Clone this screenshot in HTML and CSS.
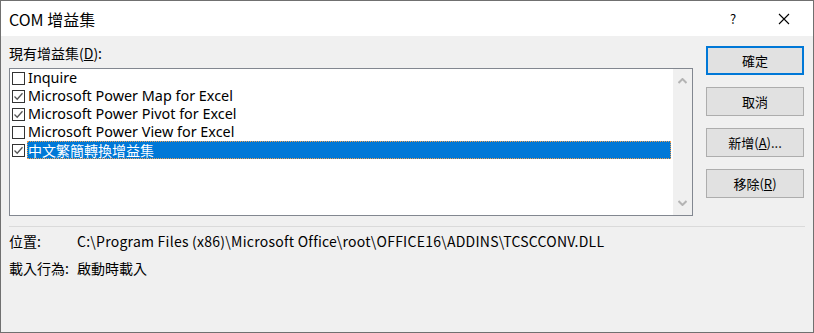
FILE: index.html
```html
<!DOCTYPE html>
<html lang="zh-Hant">

<head>
  <meta charset="UTF-8">
  <meta name="viewport" content="width=device-width, initial-scale=1.0">
  <title>COM 增益集</title>
  <link rel="stylesheet" href="styles.css">
</head>

<body>

  <div class="dialog">
    <div class="titlebar">
      <span class="title">COM 增益集</span>
      <span class="help">?</span>
      <span class="close">
        <svg width="12" height="12" viewBox="0 0 12 12"><path d="M1 1 L11 11 M11 1 L1 11" stroke="#000" stroke-width="1.1" fill="none"/></svg>
      </span>
    </div>

    <div class="main">
      <div class="left">
        <div class="label">現有增益集(<u>D</u>):</div>
        <div class="listbox">
          <div class="items">
            <div class="item">
              <span class="check"></span>
              <span class="text">Inquire</span>
            </div>
            <div class="item">
              <span class="check"><svg width="11" height="11" viewBox="0 0 11 11"><path d="M1.5 5.5 L4.2 8.2 L9.5 2.2" stroke="#555" stroke-width="1.3" fill="none"/></svg></span>
              <span class="text">Microsoft Power Map for Excel</span>
            </div>
            <div class="item">
              <span class="check"><svg width="11" height="11" viewBox="0 0 11 11"><path d="M1.5 5.5 L4.2 8.2 L9.5 2.2" stroke="#555" stroke-width="1.3" fill="none"/></svg></span>
              <span class="text">Microsoft Power Pivot for Excel</span>
            </div>
            <div class="item">
              <span class="check"></span>
              <span class="text">Microsoft Power View for Excel</span>
            </div>
            <div class="item">
              <span class="check"><svg width="11" height="11" viewBox="0 0 11 11"><path d="M1.5 5.5 L4.2 8.2 L9.5 2.2" stroke="#555" stroke-width="1.3" fill="none"/></svg></span>
              <span class="text selected">中文繁簡轉換增益集</span>
            </div>
          </div>
          <div class="scrollbar">
            <svg width="9" height="6" viewBox="0 0 9 6"><path d="M0.5 5 L4.5 1 L8.5 5" stroke="#b4b4b4" stroke-width="2" fill="none"/></svg>
            <svg width="9" height="6" viewBox="0 0 9 6"><path d="M0.5 1 L4.5 5 L8.5 1" stroke="#b4b4b4" stroke-width="2" fill="none"/></svg>
          </div>
        </div>
      </div>

      <div class="buttons">
        <button class="btn default">確定</button>
        <button class="btn">取消</button>
        <button class="btn">新增(<u>A</u>)...</button>
        <button class="btn">移除(<u>R</u>)</button>
      </div>
    </div>

    <div class="separator"></div>

    <div class="info">
      <div class="info-row">
        <span class="info-label">位置:</span>
        <span class="info-value path">C:\Program Files (x86)\Microsoft Office\root\OFFICE16\ADDINS\TCSCCONV.DLL</span>
      </div>
      <div class="info-row">
        <span class="info-label">載入行為:</span>
        <span class="info-value">啟動時載入</span>
      </div>
    </div>
  </div>

</body>

</html>
```

FILE: styles.css
```css
body {
  margin: 0;
  font-family: "Noto Sans", "Noto Sans CJK TC", sans-serif;
  color: #000;
}

.dialog {
  width: 814px;
  height: 333px;
  box-sizing: border-box;
  border: 1px solid #707070;
  background-color: #f0f0f0;
  overflow: hidden;
}

.titlebar {
  display: flex;
  align-items: center;
  height: 35px;
  background-color: #fff;
  padding-left: 8px;
}

.title {
  flex: 1;
  font-size: 16px;
  font-family: "Noto Sans CJK TC", sans-serif;
}

.help {
  width: 56px;
  text-align: center;
  font-size: 13px;
  font-family: "Noto Sans CJK TC", sans-serif;
}

.close {
  display: flex;
  justify-content: center;
  align-items: center;
  width: 46px;
  margin-right: 6px;
}

.main {
  display: flex;
  gap: 13px;
  padding: 6px 0 0 8px;
}

.left {
  width: 684px;
}

.label {
  height: 22px;
  line-height: 22px;
  font-size: 14px;
  font-family: "Noto Sans CJK TC", sans-serif;
  margin-bottom: 4px;
}

.listbox {
  display: flex;
  height: 148px;
  box-sizing: border-box;
  border: 1px solid #828790;
  background-color: #fff;
}

.items {
  flex: 1;
  padding-right: 2px;
}

.item {
  display: flex;
  align-items: center;
  height: 18px;
}

.check {
  display: flex;
  justify-content: center;
  align-items: center;
  width: 13px;
  height: 13px;
  box-sizing: border-box;
  border: 1px solid #333;
  margin-left: 2px;
  margin-right: 2px;
  background-color: #fff;
}

.text {
  flex: 1;
  height: 18px;
  line-height: 16px;
  box-sizing: border-box;
  border: 1px solid transparent;
  font-size: 14.4px;
  white-space: nowrap;
}

.text.selected {
  background-color: #0078d7;
  color: #fff;
  border: 1px dotted #f0a050;
  font-family: "Noto Sans CJK TC", sans-serif;
  font-size: 14px;
}

.scrollbar {
  display: flex;
  flex-direction: column;
  justify-content: space-between;
  align-items: center;
  width: 19px;
  background-color: #f0f0f0;
  padding: 9px 0 9px;
  box-sizing: border-box;
}

.buttons {
  display: flex;
  flex-direction: column;
  gap: 12px;
  margin-top: 4px;
}

.btn {
  width: 98px;
  height: 29px;
  background-color: #e1e1e1;
  border: 1px solid #adadad;
  font-family: "Noto Sans CJK TC", sans-serif;
  font-size: 13px;
  color: #000;
  padding: 0;
}

.btn.default {
  border: 2px solid #0078d7;
}

.separator {
  height: 1px;
  background-color: #dadada;
  margin: 10px 8px 0 8px;
}

.info {
  padding: 1px 0 0 8px;
  font-family: "Noto Sans CJK TC", sans-serif;
  font-size: 14px;
}

.info-row {
  display: flex;
  height: 27px;
  line-height: 27px;
}

.info-label {
  width: 68px;
}

.path {
  letter-spacing: 0.25px;
}
```
